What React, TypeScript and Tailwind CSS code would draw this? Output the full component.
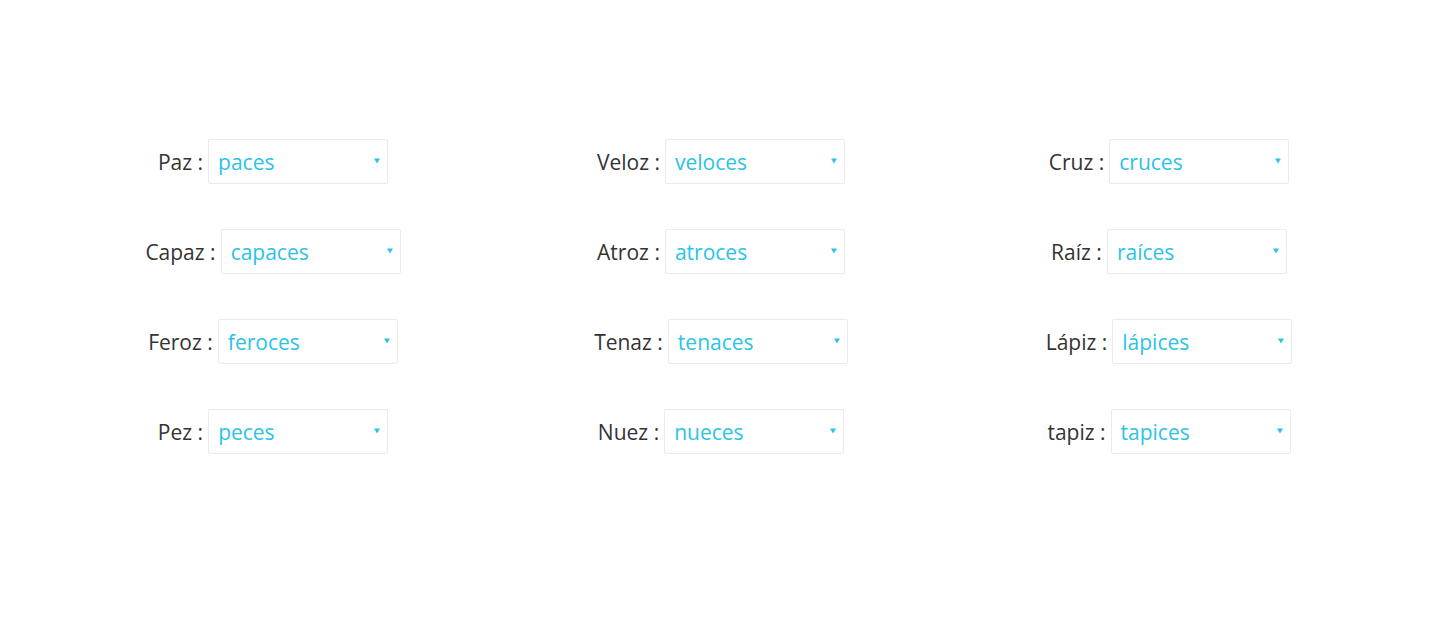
const rows: [string, string][][] = [
  [["Paz", "paces"], ["Veloz", "veloces"], ["Cruz", "cruces"]],
  [["Capaz", "capaces"], ["Atroz", "atroces"], ["Raíz", "raíces"]],
  [["Feroz", "feroces"], ["Tenaz", "tenaces"], ["Lápiz", "lápices"]],
  [["Pez", "peces"], ["Nuez", "nueces"], ["tapiz", "tapices"]],
];

function Field({ label, value }: { label: string; value: string }) {
  return (
    <div className="flex items-center justify-center gap-[5px]">
      <span className="mt-[2px] text-[21px] text-[#333333]">{label} :</span>
      <div className="relative flex h-[45px] w-[180px] items-center rounded-[2px] border border-[#ebebeb] bg-white pl-[9px]">
        <span className="mt-[2px] text-[21px] text-[#2bc3e6]">{value}</span>
        <svg
          className="absolute right-[7px] top-[18px]"
          width="6"
          height="6"
          viewBox="0 0 6 6"
        >
          <path d="M0 0.5 L6 0.5 L3 5.5 Z" fill="#2bc3e6" />
        </svg>
      </div>
    </div>
  );
}

export default function App() {
  return (
    <div
      className="min-h-[617px] bg-white pt-[139px]"
      style={{ fontFamily: '"Open Sans", "Noto Sans", sans-serif' }}
    >
      <div className="ml-[49px] grid w-[1344px] grid-cols-3 gap-y-[45px]">
        {rows.flat().map(([label, value]) => (
          <Field key={label} label={label} value={value} />
        ))}
      </div>
    </div>
  );
}
